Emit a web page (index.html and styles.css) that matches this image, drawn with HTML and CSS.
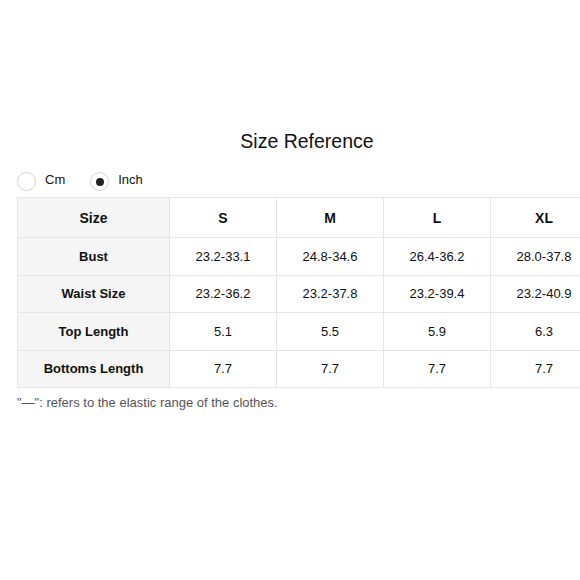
FILE: index.html
```html
<!DOCTYPE html>
<html>
<head>
<meta charset="utf-8">
<link rel="stylesheet" href="styles.css">
</head>
<body>
<div class="page">
  <div class="content">
    <h1 class="title">Size Reference</h1>
    <div class="units">
      <label class="unit"><span class="radio"></span><span class="unit-label">Cm</span></label>
      <label class="unit"><span class="radio checked"></span><span class="unit-label">Inch</span></label>
    </div>
    <table class="sizes">
      <tr class="head">
        <th class="label">Size</th><th>S</th><th>M</th><th>L</th><th>XL</th>
      </tr>
      <tr><td class="label">Bust</td><td>23.2-33.1</td><td>24.8-34.6</td><td>26.4-36.2</td><td>28.0-37.8</td></tr>
      <tr><td class="label">Waist Size</td><td>23.2-36.2</td><td>23.2-37.8</td><td>23.2-39.4</td><td>23.2-40.9</td></tr>
      <tr><td class="label">Top Length</td><td>5.1</td><td>5.5</td><td>5.9</td><td>6.3</td></tr>
      <tr><td class="label">Bottoms Length</td><td>7.7</td><td>7.7</td><td>7.7</td><td>7.7</td></tr>
    </table>
    <p class="note">"—": refers to the elastic range of the clothes.</p>
  </div>
</div>
</body>
</html>
```
FILE: styles.css
```css
html, body {
  margin: 0;
  padding: 0;
  background: #fff;
  overflow: hidden;
}
body {
  font-family: "Liberation Sans", Arial, sans-serif;
  color: #111;
}
.page {
  width: 580px;
  height: 580px;
  overflow: hidden;
}
.content {
  margin-left: 17px;
  width: 580px;
  padding-top: 129px;
}
.title {
  margin: 0;
  font-size: 19.5px;
  font-weight: normal;
  line-height: 24px;
  text-align: center;
  color: #111;
}
.units {
  display: flex;
  margin-top: 19px;
  height: 25px;
  align-items: flex-start;
}
.unit {
  display: flex;
  align-items: flex-start;
}
.unit + .unit {
  margin-left: 25px;
}
.radio {
  box-sizing: border-box;
  width: 19px;
  height: 19px;
  border: 1px solid #d4d4d4;
  border-radius: 50%;
  display: flex;
  align-items: center;
  justify-content: center;
}
.radio.checked::after {
  content: "";
  width: 8px;
  height: 8px;
  border-radius: 50%;
  background: #222;
}
.unit-label {
  font-size: 13px;
  margin-left: 9px;
  line-height: 15px;
  margin-top: 0px;
  color: #111;
}
.sizes {
  border-collapse: collapse;
  table-layout: fixed;
  width: 580px;
}
.sizes th, .sizes td {
  border: 1px solid #e6e6e6;
  text-align: center;
  padding: 0;
  width: 106px;
}
.sizes th {
  height: 39px;
  font-size: 14px;
  font-weight: bold;
}
.sizes td {
  height: 36.5px;
  font-size: 13px;
}
.sizes .label {
  width: 151px;
  background: #f5f5f5;
  font-weight: bold;
}
.note {
  margin: 7px 0 0 0;
  font-size: 13px;
  color: #555;
}
```
